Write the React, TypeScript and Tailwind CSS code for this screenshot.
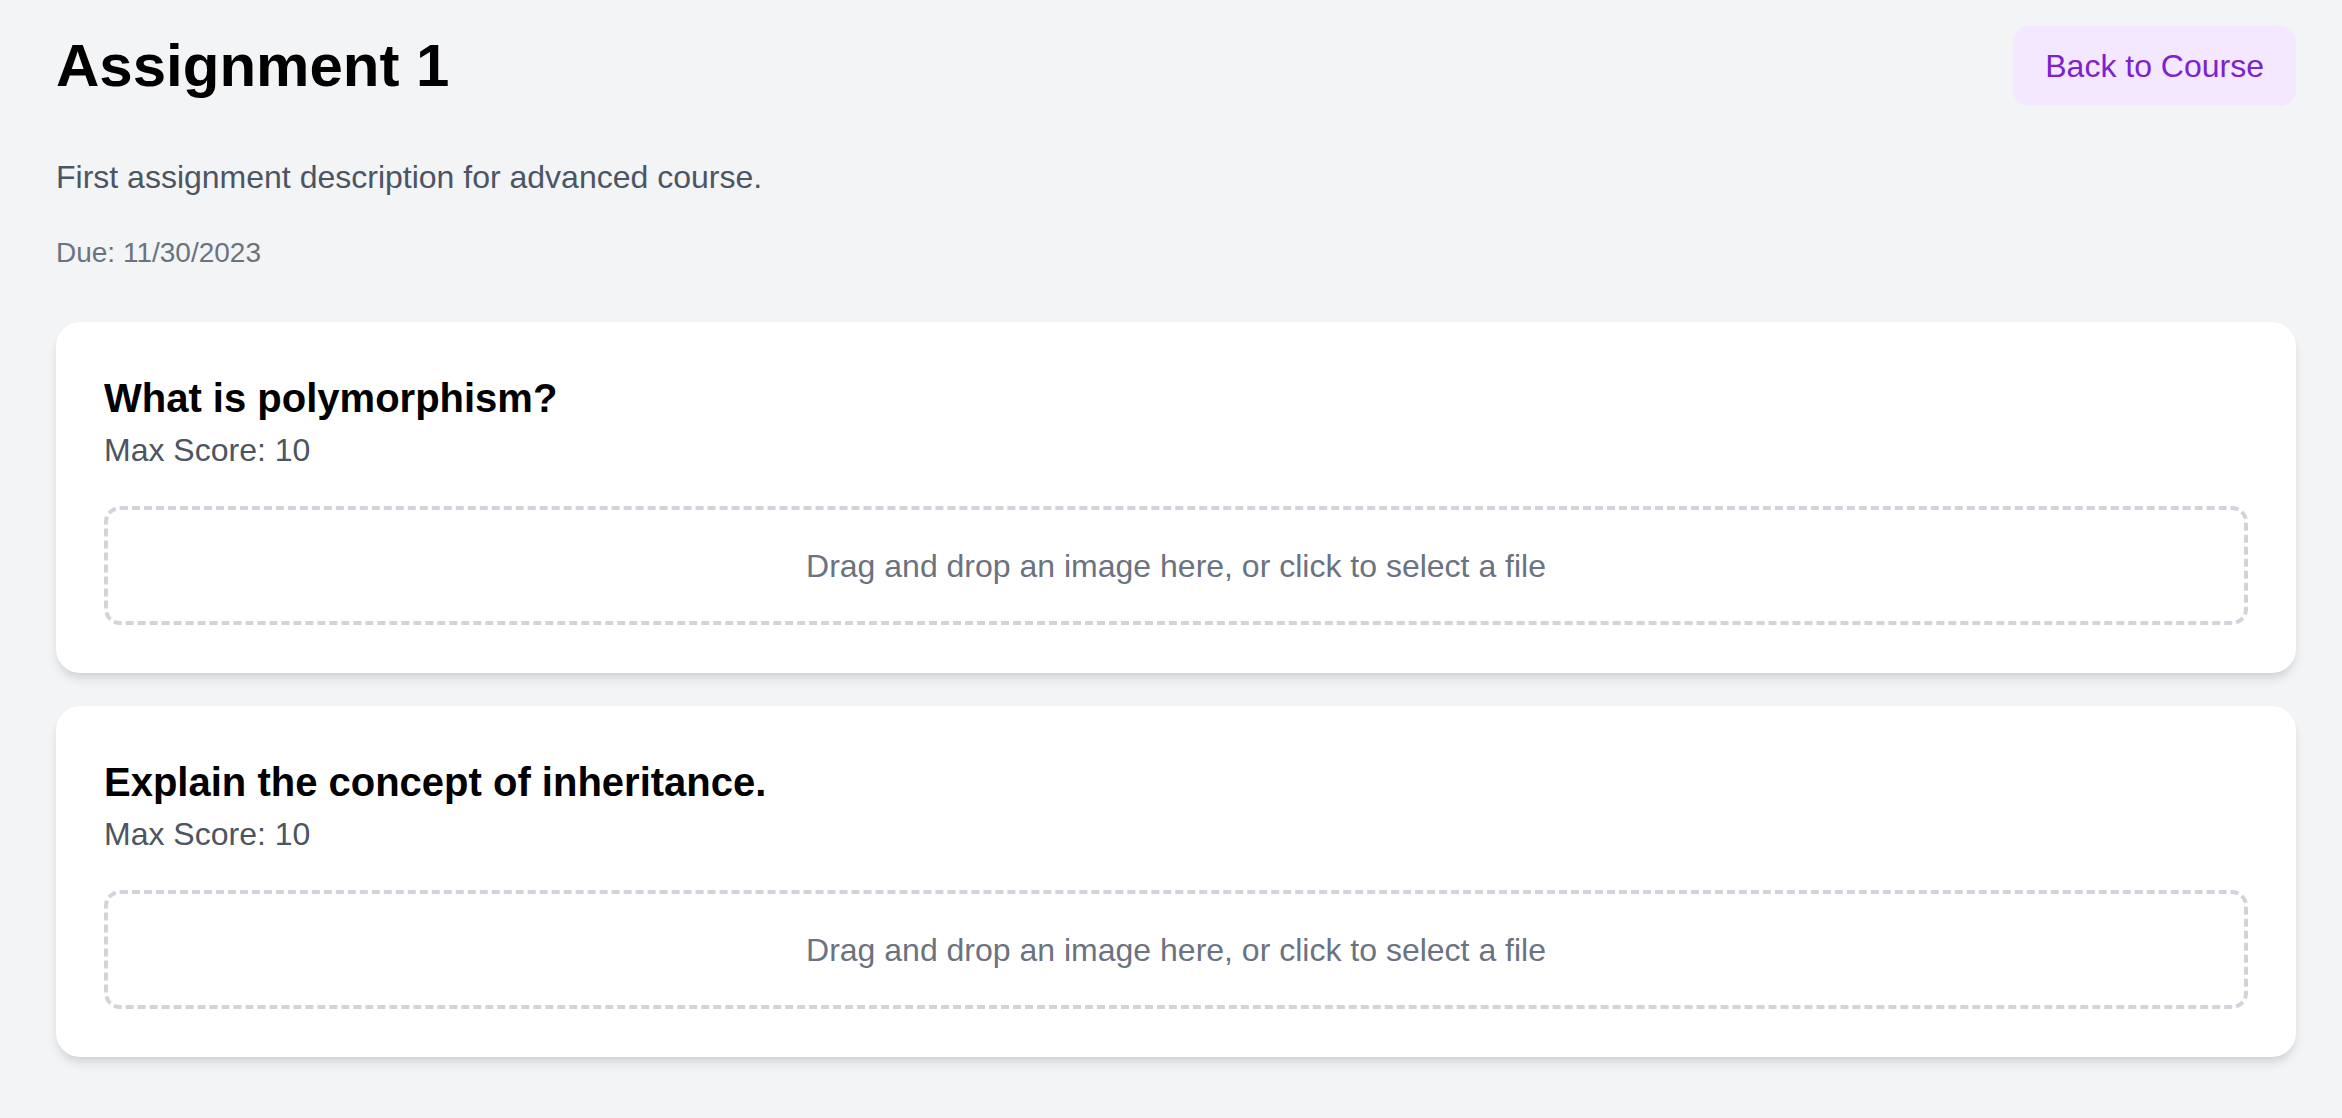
const questions = [
  { id: 1, text: "What is polymorphism?", maxScore: 10 },
  { id: 2, text: "Explain the concept of inheritance.", maxScore: 10 },
];

function QuestionCard({ text, maxScore }: { text: string; maxScore: number }) {
  return (
    <div className="bg-white rounded-[24px] p-[48px] shadow-[0_8px_12px_-2px_rgba(0,0,0,0.1),0_4px_8px_-4px_rgba(0,0,0,0.1)]">
      <h2 className="text-[40px] leading-[56px] font-bold text-black">{text}</h2>
      <p className="text-[32px] leading-[48px] text-[#4b5563]">Max Score: {maxScore}</p>
      <div className="mt-[32px] border-[4px] border-dashed border-[#d1d5db] rounded-[16px] pt-[32px] pb-[31px] text-center text-[32px] leading-[48px] text-[#6b7280] cursor-pointer">
        Drag and drop an image here, or click to select a file
      </div>
    </div>
  );
}

export default function App() {
  return (
    <div className="min-h-screen bg-[#f3f4f6] pl-[56px] pr-[46px] pt-[26px] pb-[40px] font-['Liberation_Sans',Arial,sans-serif]">
      <div className="flex items-center justify-between h-[80px] mb-[47px]">
        <h1 className="text-[60px] leading-[72px] font-bold text-black">Assignment 1</h1>
        <button className="h-[80px] px-[32px] rounded-[16px] bg-[#f3e8ff] text-[#7e22ce] text-[32px] leading-[48px]">
          Back to Course
        </button>
      </div>
      <p className="text-[32px] leading-[48px] text-[#4b5563] mb-[32px]">
        First assignment description for advanced course.
      </p>
      <p className="text-[28px] leading-[40px] text-[#6b7280] mb-[49px]">Due: 11/30/2023</p>
      <div className="flex flex-col gap-[33px]">
        {questions.map((q) => (
          <QuestionCard key={q.id} text={q.text} maxScore={q.maxScore} />
        ))}
      </div>
    </div>
  );
}
